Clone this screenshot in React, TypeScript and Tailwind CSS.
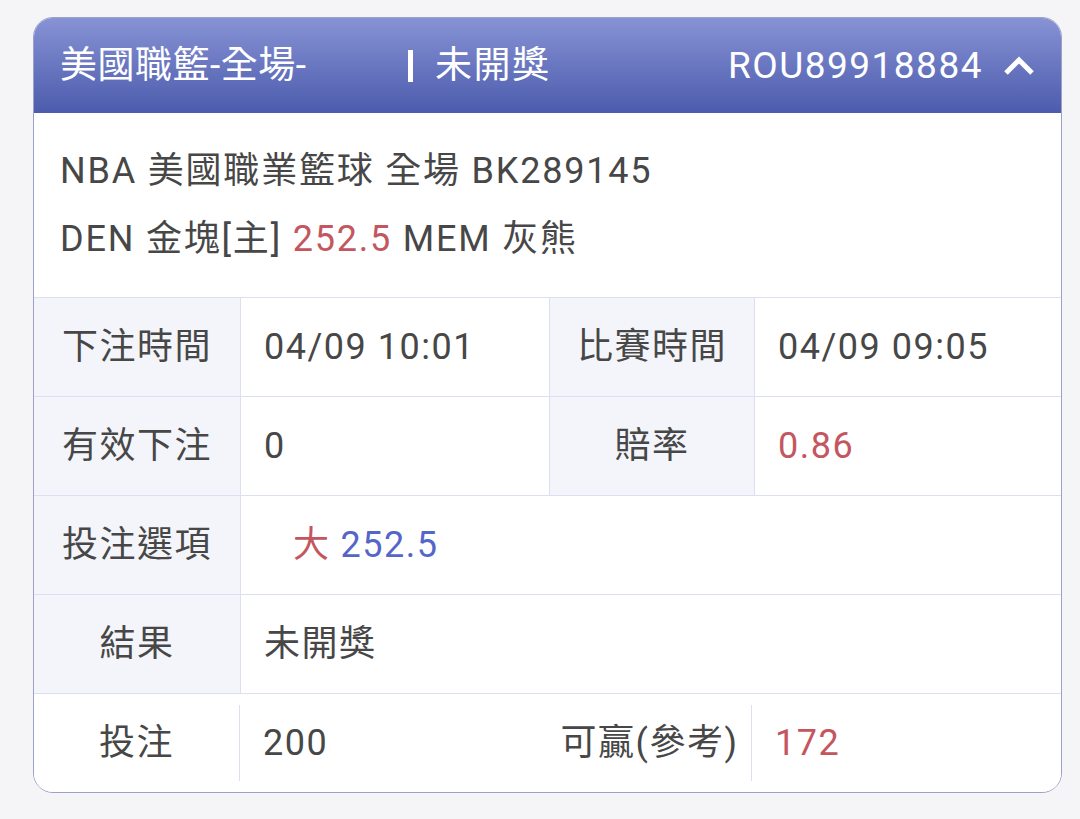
const font = { fontFamily: "Roboto, 'Noto Sans CJK TC', sans-serif" };

const Label = ({ children, last }: { children: React.ReactNode; last?: boolean }) => (
  <div
    className={
      "flex items-center justify-center text-[#474747] " +
      (last ? "bg-white" : "bg-[#f4f5fa]")
    }
  >
    {children}
  </div>
);

const Value = ({ children, className = "" }: { children: React.ReactNode; className?: string }) => (
  <div className={"flex items-center bg-white pl-[23px] text-[#474747] " + className}>{children}</div>
);

export default function App() {
  return (
    <div className="min-h-[819px] w-full bg-[#f5f5f7] pt-[17px] pl-[33px] tracking-[1.5px]" style={font}>
      <div className="w-[1029px] overflow-hidden rounded-[20px] border border-[#9ca1c9] bg-white">
        {/* header */}
        <div className="flex h-[95px] items-center bg-gradient-to-b from-[#8893d5] to-[#4c5bac] pl-[26px] pr-[26px] text-[37px] text-white">
          <div className="w-[348px] tracking-[0.5px]">美國職籃-全場-</div>
          <span className="h-[32px] w-[5px] bg-white" />
          <span className="ml-[22px]">未開獎</span>
          <div className="ml-auto flex items-center gap-[20px]">
            <span>ROU89918884</span>
            <svg width="32" height="22" viewBox="0 0 32 22" fill="none">
              <polyline points="3,18 16,5 29,18" stroke="white" strokeWidth="5" />
            </svg>
          </div>
        </div>

        {/* info */}
        <div className="px-[26px] py-6 text-[36px] leading-[68px] tracking-[1.8px] text-[#474747]">
          <div>NBA 美國職業籃球 全場 BK289145</div>
          <div>
            DEN 金塊[主] <span className="text-[#c4565f]">252.5</span> MEM 灰熊
          </div>
        </div>

        {/* table */}
        <div className="grid grid-cols-[206px_308px_204px_1fr] auto-rows-[98px] gap-px bg-[#dcdff0] pt-px text-[36px]">
          <Label>下注時間</Label>
          <Value>04/09 10:01</Value>
          <Label>比賽時間</Label>
          <Value>04/09 09:05</Value>

          <Label>有效下注</Label>
          <Value>0</Value>
          <Label>賠率</Label>
          <Value className="text-[#c4565f]">0.86</Value>

          <Label>投注選項</Label>
          <Value className="col-span-3 pl-[52px]">
            <span className="text-[#c4565f]">大</span>
            <span className="ml-[10px] text-[#5566c8]">252.5</span>
          </Value>

          <Label>結果</Label>
          <Value className="col-span-3">未開獎</Value>

          <div className="col-span-4 grid grid-cols-[206px_308px_204px_1fr] bg-white">
            <div className="my-[11px] flex items-center justify-center border-r border-[#dcdff0] text-[#474747]">
              投注
            </div>
            <div className="flex items-center pl-[23px] text-[#474747]">200</div>
            <div className="my-[11px] flex items-center justify-center border-r border-[#dcdff0] text-[#474747]">
              可贏(參考)
            </div>
            <div className="flex items-center pl-[23px] text-[#c4565f]">172</div>
          </div>
        </div>
      </div>
    </div>
  );
}
